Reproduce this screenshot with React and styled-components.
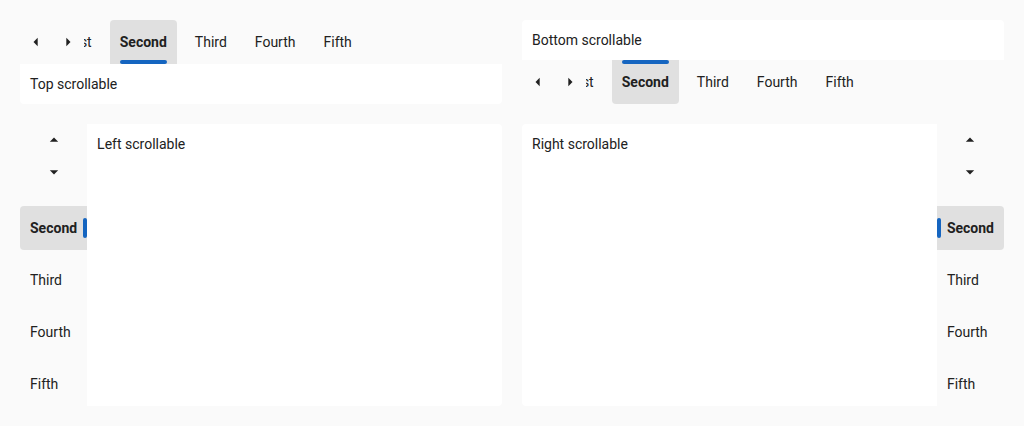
import React, { useLayoutEffect, useRef, useState } from "react";
import styled, { createGlobalStyle, css } from "styled-components";

const Global = createGlobalStyle`
  html, body { margin: 0; padding: 0; background: #fafafa; }
  body { font-family: Roboto, "Noto Sans", "Liberation Sans", sans-serif; color: #212121; }
  * { box-sizing: border-box; }
`;

const Page = styled.div`
  display: grid;
  grid-template-columns: 1fr 1fr;
  grid-template-rows: auto minmax(0, 1fr);
  gap: 20px;
  padding: 20px;
  height: 426px;
  background: #fafafa;
`;

const isVertical = (p) => p.$placement === "left" || p.$placement === "right";

const Root = styled.div`
  display: flex;
  flex-direction: ${(p) => (isVertical(p) ? "row" : "column")};
  min-height: 0;
  min-width: 0;
`;

const List = styled.div`
  display: flex;
  flex: none;
  flex-direction: ${(p) => (isVertical(p) ? "column" : "row")};
  min-height: 0;
  min-width: 0;
`;

const ScrollButton = styled.button`
  flex: none;
  display: flex;
  align-items: center;
  justify-content: center;
  padding: 0;
  border: none;
  background: transparent;
  color: #212121;
  cursor: pointer;
  ${(p) =>
    p.$vertical
      ? css`
          height: 32px;
        `
      : css`
          width: 32px;
          height: 44px;
        `}
  svg {
    width: 20px;
    height: 20px;
    fill: currentColor;
  }
`;

const Viewport = styled.div`
  overflow: hidden;
  flex: 1 1 0;
  min-width: 0;
  min-height: 0;
  display: flex;
  flex-direction: ${(p) => (isVertical(p) ? "column" : "row")};
`;

const Track = styled.div`
  position: relative;
  flex: none;
  display: flex;
  flex-direction: ${(p) => (isVertical(p) ? "column" : "row")};
  gap: 8px;
`;

const tabRadius = {
  top: "4px 4px 0 0",
  bottom: "0 0 4px 4px",
  left: "4px 0 0 4px",
  right: "0 4px 4px 0",
};

const Tab = styled.button`
  position: relative;
  flex: none;
  border: none;
  margin: 0;
  padding: 12px 10px;
  font-family: inherit;
  font-size: 14px;
  line-height: 20px;
  text-align: left;
  white-space: nowrap;
  color: #212121;
  cursor: pointer;
  border-radius: ${(p) => tabRadius[p.$placement]};
  background: ${(p) => (p.$selected ? "#e0e0e0" : "transparent")};
  font-weight: ${(p) => (p.$selected ? 700 : 400)};
`;

const indicatorPos = {
  top: css`left: 10px; right: 10px; bottom: 0; height: 4px;`,
  bottom: css`left: 10px; right: 10px; top: 0; height: 4px;`,
  left: css`top: 12px; bottom: 12px; right: 0; width: 4px;`,
  right: css`top: 12px; bottom: 12px; left: 0; width: 4px;`,
};

const Indicator = styled.span`
  position: absolute;
  background: #1565c0;
  border-radius: 2px;
  ${(p) => indicatorPos[p.$placement]}
`;

const panelRadius = {
  top: "0 0 4px 4px",
  bottom: "4px 4px 0 0",
  left: "0 4px 4px 0",
  right: "4px 0 0 4px",
};

const Panel = styled.div`
  background: #ffffff;
  padding: 10px;
  font-size: 14px;
  line-height: 20px;
  color: #212121;
  border-radius: ${(p) => panelRadius[p.$placement]};
  ${(p) =>
    isVertical(p)
      ? css`
          flex: 1 1 0;
          min-width: 0;
        `
      : css`
          flex: none;
        `}
`;

const Arrow = ({ dir }) => {
  const d = {
    left: "M14 7l-5 5 5 5V7z",
    right: "M10 17l5-5-5-5v10z",
    up: "M7 14l5-5 5 5z",
    down: "M7 10l5 5 5-5z",
  }[dir];
  return (
    <svg viewBox="0 0 24 24" aria-hidden="true">
      <path d={d} />
    </svg>
  );
};

const TABS = ["First", "Second", "Third", "Fourth", "Fifth"];

function ScrollTabs({ placement, label, selected = "Second" }) {
  const vertical = placement === "left" || placement === "right";
  const selRef = useRef(null);
  const [offset, setOffset] = useState(0);

  useLayoutEffect(() => {
    const t = selRef.current;
    if (!t) return;
    setOffset(vertical ? t.offsetTop - 18 : t.offsetLeft - 26);
  }, [vertical]);

  const list = (
    <List $placement={placement}>
      <ScrollButton $vertical={vertical} aria-label="Scroll back">
        <Arrow dir={vertical ? "up" : "left"} />
      </ScrollButton>
      <ScrollButton $vertical={vertical} aria-label="Scroll forward">
        <Arrow dir={vertical ? "down" : "right"} />
      </ScrollButton>
      <Viewport $placement={placement}>
        <Track
          $placement={placement}
          style={{
            transform: vertical
              ? `translateY(${-offset}px)`
              : `translateX(${-offset}px)`,
          }}
        >
          {TABS.map((t) => {
            const sel = t === selected;
            return (
              <Tab
                key={t}
                ref={sel ? selRef : undefined}
                $placement={placement}
                $selected={sel}
              >
                {t}
                {sel && <Indicator $placement={placement} />}
              </Tab>
            );
          })}
        </Track>
      </Viewport>
    </List>
  );

  const panel = <Panel $placement={placement}>{label}</Panel>;
  const listFirst = placement === "top" || placement === "left";

  return (
    <Root $placement={placement}>
      {listFirst ? list : panel}
      {listFirst ? panel : list}
    </Root>
  );
}

export default function App() {
  return (
    <>
      <Global />
      <Page>
        <ScrollTabs placement="top" label="Top scrollable" />
        <ScrollTabs placement="bottom" label="Bottom scrollable" />
        <ScrollTabs placement="left" label="Left scrollable" />
        <ScrollTabs placement="right" label="Right scrollable" />
      </Page>
    </>
  );
}
